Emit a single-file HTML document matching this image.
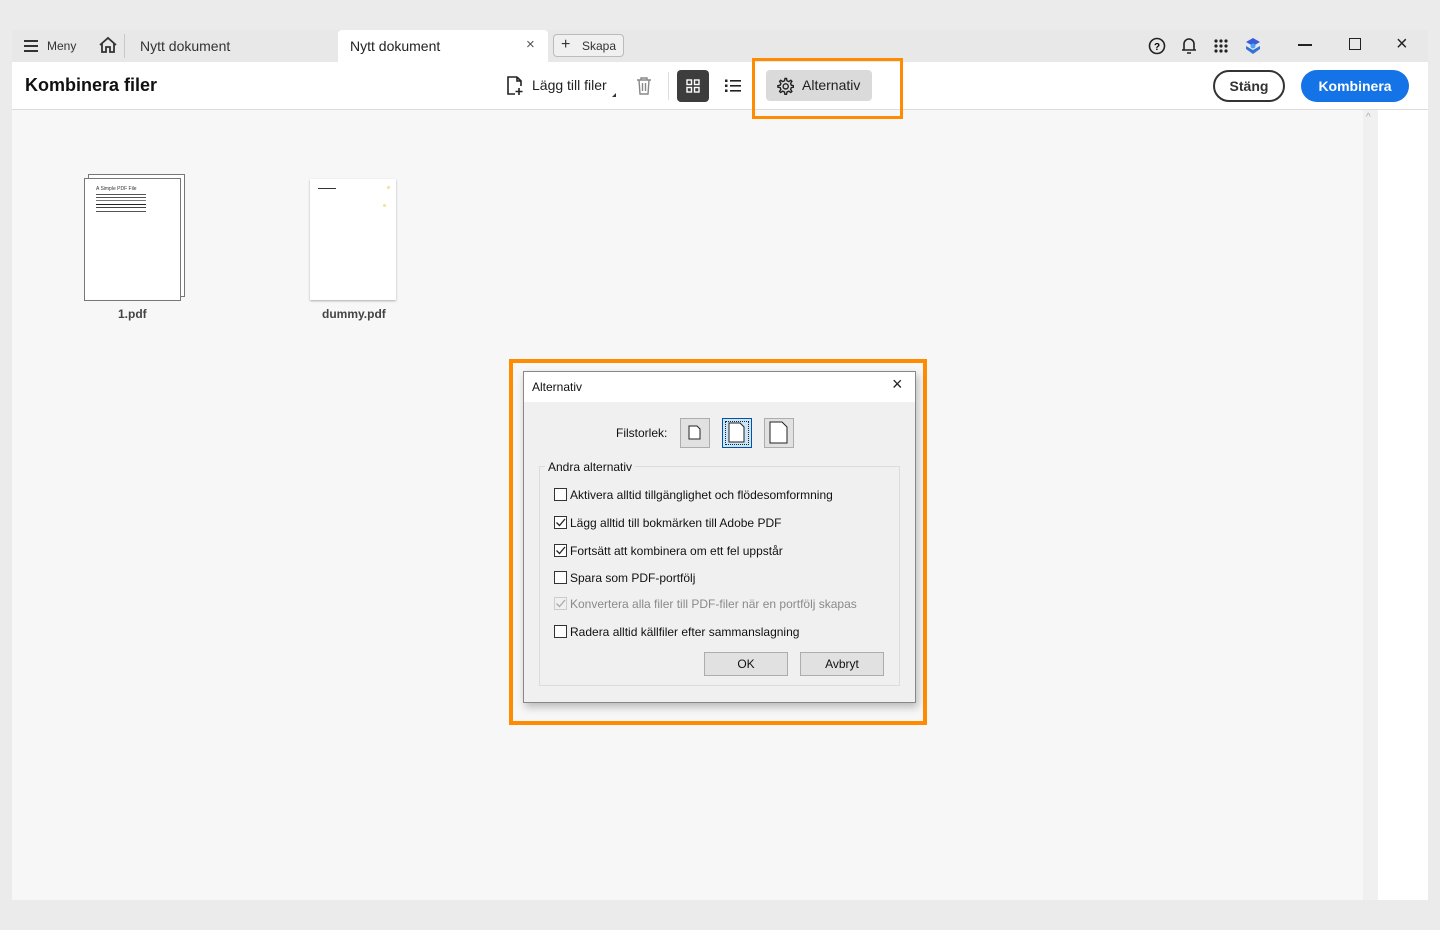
<!DOCTYPE html>
<html><head><meta charset="utf-8"><style>
*{margin:0;padding:0;box-sizing:border-box}
body{width:1440px;height:930px;background:#ebebeb;font-family:"Liberation Sans",sans-serif;position:relative;overflow:hidden;color:#222}
.abs{position:absolute}
.cb{position:absolute;left:554px;width:13px;height:13px;border:1px solid #333;background:#fff}
.cl{position:absolute;left:570px;font-size:12px;color:#111}
</style></head><body>
<div class="abs" style="left:12px;top:30px;width:1416px;height:32px;background:#e8e8e8"></div>
<div class="abs" style="left:24px;top:40px;width:14px;height:2px;background:#333;box-shadow:0 5px 0 #333,0 10px 0 #333"></div>
<div class="abs" style="left:47px;top:39px;font-size:12px;color:#333">Meny</div>
<svg class="abs" style="left:98px;top:36px" width="20" height="18" viewBox="0 0 20 18"><path d="M2 9 L10 2 L18 9 M4 7 V16 H8 V11 H12 V16 H16 V7" fill="none" stroke="#333" stroke-width="1.8"/></svg>
<div class="abs" style="left:124px;top:34px;width:1px;height:24px;background:#c8c8c8"></div>
<div class="abs" style="left:140px;top:38px;font-size:14px;color:#333">Nytt dokument</div>
<div class="abs" style="left:338px;top:30px;width:210px;height:32px;background:#fff;border-radius:4px 4px 0 0"></div>
<div class="abs" style="left:350px;top:38px;font-size:14px;color:#222">Nytt dokument</div>
<div class="abs" style="left:526px;top:36px;font-size:15px;color:#555">×</div>
<div class="abs" style="left:553px;top:34px;width:71px;height:23px;border:1px solid #bbb;border-radius:4px;background:#f0f0f0"></div>
<div class="abs" style="left:561px;top:36px;font-size:16px;color:#333">+</div>
<div class="abs" style="left:582px;top:39px;font-size:12px;color:#333">Skapa</div>
<svg class="abs" style="left:1148px;top:37px" width="18" height="18"><circle cx="9" cy="9" r="7.5" fill="none" stroke="#222" stroke-width="1.6"/><text x="9" y="13" font-size="10" font-weight="bold" text-anchor="middle" font-family="Liberation Sans">?</text></svg>
<svg class="abs" style="left:1180px;top:36px" width="18" height="20"><path d="M4 14 V8 a5 5 0 0 1 10 0 V14 H2 H16 M7 17 H11" fill="none" stroke="#222" stroke-width="1.6"/></svg>
<svg class="abs" style="left:1213px;top:38px" width="16" height="16"><g fill="#222"><circle cx="3" cy="3" r="1.6"/><circle cx="8" cy="3" r="1.6"/><circle cx="13" cy="3" r="1.6"/><circle cx="3" cy="8" r="1.6"/><circle cx="8" cy="8" r="1.6"/><circle cx="13" cy="8" r="1.6"/><circle cx="3" cy="13" r="1.6"/><circle cx="8" cy="13" r="1.6"/><circle cx="13" cy="13" r="1.6"/></g></svg>
<svg class="abs" style="left:1245px;top:37px" width="16" height="18"><path d="M8 1 L15 5 L8 9 L1 5Z" fill="#3b5bdb"/><path d="M1 9 L8 13 L15 9 L15 12 L8 17 L1 12Z" fill="#2f74d6"/><circle cx="8" cy="9" r="2.5" fill="#4aa3f0"/></svg>
<div class="abs" style="left:1298px;top:44px;width:14px;height:2px;background:#222"></div>
<div class="abs" style="left:1349px;top:38px;width:12px;height:12px;border:1.6px solid #222"></div>
<div class="abs" style="left:1396px;top:33px;font-size:20px;color:#222">×</div>
<div class="abs" style="left:12px;top:62px;width:1416px;height:48px;background:#fff;border-bottom:1px solid #dcdcdc"></div>
<div class="abs" style="left:25px;top:75px;font-size:18px;font-weight:bold;color:#111">Kombinera filer</div>
<svg class="abs" style="left:506px;top:76px" width="18" height="20"><path d="M11 1 H2 V18 H9 M11 1 L15 5 V10 M11 1 V5 H15 M13 12 V19 M9.5 15.5 H16.5" fill="none" stroke="#222" stroke-width="1.6"/></svg>
<div class="abs" style="left:532px;top:77px;font-size:14px;color:#222">Lägg till filer</div>
<div class="abs" style="left:612px;top:93px;width:0;height:0;border-left:4px solid transparent;border-bottom:4px solid #333"></div>
<svg class="abs" style="left:636px;top:77px" width="16" height="18"><path d="M1 3 H15 M5 3 V1 H11 V3 M3 3 L4 17 H12 L13 3 M6.5 6 V14 M9.5 6 V14" fill="none" stroke="#888" stroke-width="1.4"/></svg>
<div class="abs" style="left:668px;top:72px;width:1px;height:28px;background:#ddd"></div>
<div class="abs" style="left:677px;top:70px;width:32px;height:32px;background:#3d3d3d;border-radius:4px"></div>
<svg class="abs" style="left:686px;top:79px" width="14" height="14"><g fill="none" stroke="#fff" stroke-width="1.4"><rect x="1" y="1" width="4.5" height="4.5"/><rect x="8.5" y="1" width="4.5" height="4.5"/><rect x="1" y="8.5" width="4.5" height="4.5"/><rect x="8.5" y="8.5" width="4.5" height="4.5"/></g></svg>
<svg class="abs" style="left:725px;top:79px" width="16" height="14"><g fill="#222"><rect x="0" y="0.5" width="2.5" height="2.5"/><rect x="0" y="5.5" width="2.5" height="2.5"/><rect x="0" y="10.5" width="2.5" height="2.5"/><rect x="5" y="1" width="11" height="1.6"/><rect x="5" y="6" width="11" height="1.6"/><rect x="5" y="11" width="11" height="1.6"/></g></svg>
<div class="abs" style="left:766px;top:70px;width:106px;height:31px;background:#dadada;border-radius:4px"></div>
<svg class="abs" style="left:776px;top:77px" width="18" height="18" viewBox="0 0 18 18"><path d="M9 1.5 L10.5 1.5 L11 3.8 L12.8 4.6 L14.8 3.3 L15.9 4.4 L14.6 6.4 L15.3 8.2 L17.5 8.6 V10.2 L15.3 10.6 L14.6 12.4 L15.9 14.4 L14.8 15.5 L12.8 14.2 L11 15 L10.5 17.3 H8.9 L8.5 15 L6.7 14.2 L4.7 15.5 L3.6 14.4 L4.9 12.4 L4.2 10.6 L1.9 10.2 V8.6 L4.2 8.2 L4.9 6.4 L3.6 4.4 L4.7 3.3 L6.7 4.6 L8.5 3.8Z" fill="none" stroke="#222" stroke-width="1.4"/><circle cx="9.7" cy="9.4" r="2.6" fill="none" stroke="#222" stroke-width="1.4"/></svg>
<div class="abs" style="left:802px;top:77px;font-size:14px;color:#222">Alternativ</div>
<div class="abs" style="left:1213px;top:70px;width:72px;height:32px;border:2px solid #333;border-radius:16px;font-size:14px;font-weight:bold;color:#333;text-align:center;line-height:28px">Stäng</div>
<div class="abs" style="left:1301px;top:70px;width:108px;height:32px;background:#1473e6;border-radius:16px;font-size:14px;font-weight:bold;color:#fff;text-align:center;line-height:32px">Kombinera</div>
<div class="abs" style="left:12px;top:110px;width:1351px;height:790px;background:#f7f7f7"></div>
<div class="abs" style="left:1363px;top:110px;width:15px;height:790px;background:#f0f0f0"></div>
<div class="abs" style="left:1366px;top:112px;font-size:10px;color:#aaa">^</div>
<div class="abs" style="left:1378px;top:110px;width:50px;height:790px;background:#fff"></div>
<div class="abs" style="left:752px;top:58px;width:151px;height:61px;border:3px solid #ff8c00"></div>
<div class="abs" style="left:88px;top:174px;width:97px;height:123px;background:#fff;border:1px solid #777"></div>
<div class="abs" style="left:84px;top:178px;width:97px;height:123px;background:#fff;border:1px solid #777"></div>
<div class="abs" style="left:96px;top:186px;font-size:5px;color:#333">A Simple PDF File</div>
<div class="abs" style="left:96px;top:194px;width:50px;height:1px;background:#555;box-shadow:0 3px 0 #555,0 6px 0 #777,0 10px 0 #222,0 13px 0 #444,0 17px 0 #555"></div>
<div class="abs" style="left:118px;top:307px;font-size:12px;font-weight:bold;color:#444">1.pdf</div>
<div class="abs" style="left:310px;top:179px;width:86px;height:121px;background:#fff;box-shadow:0 1px 2px rgba(0,0,0,.3)"></div>
<div class="abs" style="left:318px;top:188px;width:18px;height:1px;background:#333"></div>
<div class="abs" style="left:387px;top:186px;width:3px;height:3px;background:#f3e29a;border-radius:50%"></div>
<div class="abs" style="left:383px;top:204px;width:3px;height:3px;background:#f3e29a;border-radius:50%"></div>
<div class="abs" style="left:322px;top:307px;font-size:12px;font-weight:bold;color:#444">dummy.pdf</div>
<div class="abs" style="left:509px;top:359px;width:418px;height:366px;border:4px solid #ff8c00"></div>
<div class="abs" style="left:523px;top:371px;width:393px;height:332px;background:#f0f0f0;border:1px solid #888;box-shadow:2px 4px 8px rgba(0,0,0,.25)"></div>
<div class="abs" style="left:524px;top:372px;width:391px;height:30px;background:#fff"></div>
<div class="abs" style="left:532px;top:380px;font-size:12px;color:#111">Alternativ</div>
<div class="abs" style="left:892px;top:374px;font-size:18px;color:#222">×</div>
<div class="abs" style="left:616px;top:426px;font-size:12px;color:#111">Filstorlek:</div>
<div class="abs" style="left:680px;top:418px;width:30px;height:30px;background:#e1e1e1;border:1px solid #adadad"></div>
<svg class="abs" style="left:688px;top:425px" width="14" height="16"><path d="M1 1 H9 L12 4 V14 H1Z" fill="#fff" stroke="#222"/></svg>
<div class="abs" style="left:722px;top:418px;width:30px;height:30px;background:#cce4f7;border:1px solid #0054a6;outline:1px dotted #222;outline-offset:-4px"></div>
<svg class="abs" style="left:728px;top:422px" width="18" height="22"><path d="M1 1 H12 L16 5 V20 H1Z" fill="#fff" stroke="#222"/></svg>
<div class="abs" style="left:764px;top:418px;width:30px;height:30px;background:#e1e1e1;border:1px solid #adadad"></div>
<svg class="abs" style="left:769px;top:421px" width="20" height="24"><path d="M1 1 H13 L18 6 V22 H1Z" fill="#fff" stroke="#222"/></svg>
<div class="abs" style="left:539px;top:466px;width:361px;height:220px;border:1px solid #dcdcdc"></div>
<div class="abs" style="left:545px;top:460px;padding:0 3px;background:#f0f0f0;font-size:12px;color:#111">Andra alternativ</div>
<div class="cb" style="top:488px"></div><div class="cl" style="top:488px">Aktivera alltid tillgänglighet och flödesomformning</div>
<div class="cb" style="top:516px"><svg width="11" height="11" style="position:absolute;left:0;top:0"><path d="M1.5 5.5 L4.5 8.5 L10 2" fill="none" stroke="#222" stroke-width="1.3"/></svg></div><div class="cl" style="top:516px">Lägg alltid till bokmärken till Adobe PDF</div>
<div class="cb" style="top:544px"><svg width="11" height="11" style="position:absolute;left:0;top:0"><path d="M1.5 5.5 L4.5 8.5 L10 2" fill="none" stroke="#222" stroke-width="1.3"/></svg></div><div class="cl" style="top:544px">Fortsätt att kombinera om ett fel uppstår</div>
<div class="cb" style="top:571px"></div><div class="cl" style="top:571px">Spara som PDF-portfölj</div>
<div class="cb" style="top:597px;border-color:#ccc;background:#f0f0f0"><svg width="11" height="11" style="position:absolute;left:0;top:0"><path d="M1.5 5.5 L4.5 8.5 L10 2" fill="none" stroke="#aaa" stroke-width="1.3"/></svg></div><div class="cl" style="top:597px;color:#8a8a8a">Konvertera alla filer till PDF-filer när en portfölj skapas</div>
<div class="cb" style="top:625px"></div><div class="cl" style="top:625px">Radera alltid källfiler efter sammanslagning</div>
<div class="abs" style="left:704px;top:652px;width:84px;height:24px;background:#e1e1e1;border:1px solid #adadad;font-size:12px;text-align:center;line-height:22px;color:#111">OK</div>
<div class="abs" style="left:800px;top:652px;width:84px;height:24px;background:#e1e1e1;border:1px solid #adadad;font-size:12px;text-align:center;line-height:22px;color:#111">Avbryt</div>
</body></html>
